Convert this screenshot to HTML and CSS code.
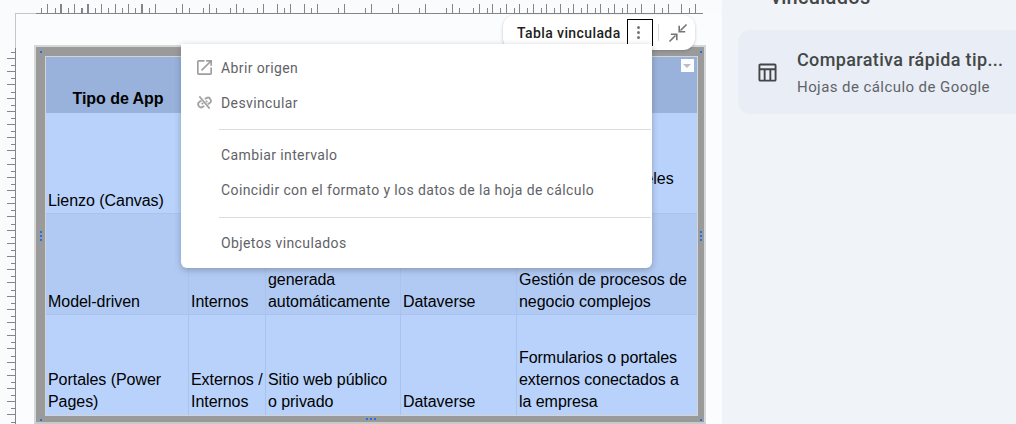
FILE: index.html
```html
<!DOCTYPE html>
<html lang="es">
<head>
<meta charset="utf-8">
<title>Tabla vinculada</title>
<link rel="stylesheet" href="styles.css">
</head>
<body>
<div class="app">
  <main class="canvas">
    <div class="hruler-row"><div class="hruler"></div></div>
    <div class="canvas-body">
      <div class="vruler"></div>
      <div class="page">
        <div class="frame">
          <span class="handle h-tl"></span>
          <span class="handle h-tr"></span>
          <span class="handle h-ml"></span>
          <span class="handle h-mr"></span>
          <span class="handle h-bl"></span>
          <span class="handle h-bc"></span>
          <span class="handle h-br"></span>
          <div class="sheet">
            <div class="cell head">Tipo de App</div>
            <div class="cell head"></div>
            <div class="cell head"></div>
            <div class="cell head"></div>
            <div class="cell head last"><span class="filter"></span></div>
            <div class="cell">Lienzo (Canvas)</div>
            <div class="cell"></div>
            <div class="cell"></div>
            <div class="cell"></div>
            <div class="cell last">Apps ágiles y paneles<br>ligeros</div>
            <div class="cell alt">Model-driven</div>
            <div class="cell alt">Internos</div>
            <div class="cell alt">generada automáticamente</div>
            <div class="cell alt">Dataverse</div>
            <div class="cell alt last">Gestión de procesos de negocio complejos</div>
            <div class="cell">Portales (Power Pages)</div>
            <div class="cell">Externos / Internos</div>
            <div class="cell">Sitio web público o privado</div>
            <div class="cell">Dataverse</div>
            <div class="cell last">Formularios o portales externos conectados a la empresa</div>
          </div>
        </div>
      </div>
    </div>

    <div class="chip">
      <span class="chip-label">Tabla vinculada</span>
      <span class="kebab"><i></i><i></i><i></i></span>
      <span class="chip-sep"></span>
      <svg class="collapse" viewBox="0 0 20 20" width="20" height="20"><path d="M18.5 1.5 12.5 7.5M11.2 2.8v6h6M1.5 18.5 7.5 12.5M2.8 11.2h6v6" fill="none" stroke="#757575" stroke-width="1.6"/></svg>
    </div>

    <div class="menu">
      <div class="item">
        <svg class="ico" viewBox="3 3 18 18" width="15" height="15"><path fill="#9e9e9e" d="M19 19H5V5h7V3H5a2 2 0 0 0-2 2v14a2 2 0 0 0 2 2h14c1.1 0 2-.9 2-2v-7h-2v7zM14 3v2h3.59l-9.83 9.83 1.41 1.41L19 6.41V10h2V3h-7z"/></svg>
        <span>Abrir origen</span>
      </div>
      <div class="item">
        <svg class="ico" viewBox="0 0 16 16" width="15" height="15"><g transform="rotate(-28 8 8)"><path d="M6 4.8H4a3.2 3.2 0 0 0 0 6.4h2M10 4.8h2a3.2 3.2 0 0 1 0 6.4h-2M4.5 8H6.5M9.5 8h2" fill="none" stroke="#a3a3a3" stroke-width="2"/></g><path d="M2.5 1.5 13.5 14.5" fill="none" stroke="#a3a3a3" stroke-width="1.8"/></svg>
        <span>Desvincular</span>
      </div>
      <div class="rule"></div>
      <div class="item plain">Cambiar intervalo</div>
      <div class="item plain">Coincidir con el formato y los datos de la hoja de cálculo</div>
      <div class="rule rule-low"></div>
      <div class="item plain">Objetos vinculados</div>
    </div>
  </main>

  <aside class="side">
    <h2 class="side-title">vinculados</h2>
    <div class="card">
      <svg class="table-ico" viewBox="0 0 20 20" width="19" height="19"><path d="M2.5 1.5h15a1 1 0 0 1 1 1v15a1 1 0 0 1-1 1h-15a1 1 0 0 1-1-1v-15a1 1 0 0 1 1-1ZM1.5 6.5h17M7 6.5v12M13 6.5v12" fill="none" stroke="#444746" stroke-width="2"/></svg>
      <div class="card-text">
        <div class="card-title">Comparativa rápida tip...</div>
        <div class="card-sub">Hojas de cálculo de Google</div>
      </div>
    </div>
  </aside>
</div>
</body>
</html>
```
FILE: styles.css
```css
* { box-sizing: border-box; }
html, body { margin: 0; padding: 0; height: 424px; overflow: hidden; }
body { font-family: "Liberation Sans", Arial, sans-serif; color: #000; background: #f9fbfd; }
.app { display: flex; width: 1016px; height: 424px; overflow: hidden; }

.canvas { position: relative; width: 722px; flex: none; background: #f9fbfd; overflow: hidden; }
.hruler-row {
  height: 14px;
  padding-left: 36px;
  background: linear-gradient(#c4c7c5, #c4c7c5) 15px 13px / 21px 1px no-repeat;
}
.hruler {
  height: 14px;
  width: 667px;
  border-bottom: 1px solid #80868b;
  background:
    repeating-linear-gradient(90deg, transparent 0 11px, #80868b 11px 12px, transparent 12px 13.5px) 0 100% / 100% 9px no-repeat,
    repeating-linear-gradient(90deg, transparent 0 5px, #80868b 5px 6px, transparent 6px 13.5px) 0 100% / 100% 5px no-repeat;
}
.canvas-body {
  display: flex;
  height: 410px;
  background: linear-gradient(#c4c7c5, #c4c7c5) 15px 0 / 1px 100% no-repeat;
}
.vruler {
  width: 16px;
  flex: none;
  margin-top: 34px;
  border-right: 1px solid #80868b;
  background:
    repeating-linear-gradient(180deg, transparent 0 10px, #80868b 10px 11px, transparent 11px 13.2px) 100% 0 / 8px 100% no-repeat,
    repeating-linear-gradient(180deg, transparent 0 4px, #80868b 4px 5px, transparent 5px 13.2px) 100% 0 / 4px 100% no-repeat;
}
.page {
  flex: 1;
  padding: 31px 0 0 18px;
  background: #fbfcfe;
}
.frame {
  position: relative;
  width: 672px;
  height: 379px;
  border: 2px solid #d6d8d6;
  border-bottom-color: #c8cac8;
  background: #9a9a9a;
  padding: 10px 7px 7px 10px;
}

.handle { position: absolute; background: #1a73e8; width: 2px; height: 2px; }
.h-tl { left: 4px; top: 4px; }
.h-tr { right: 2px; top: 4px; }
.h-bl { left: 4px; bottom: 1px; }
.h-br { right: 2px; bottom: 1px; }
.h-ml { left: 4px; top: 184px; height: 10px; background: repeating-linear-gradient(180deg, #1a73e8 0 2px, transparent 2px 4px); }
.h-mr { right: 2px; top: 184px; height: 10px; background: repeating-linear-gradient(180deg, #1a73e8 0 2px, transparent 2px 4px); }
.h-bc { left: 330px; bottom: 2px; width: 10px; background: repeating-linear-gradient(90deg, #1a73e8 0 2px, transparent 2px 4px); }

.sheet {
  display: grid;
  grid-template-columns: 143px 77px 135px 116px 180px;
  grid-template-rows: 56px 101px 101px 100px;
  width: 651px;
  height: 358px;
  outline: 1px solid #d3d5d5;
  background: #b8d2fb;
}
.cell {
  display: flex;
  align-items: flex-end;
  font-size: 16px;
  line-height: 22px;
  letter-spacing: -.05px;
  padding: 0 1px 1px 2px;
  background: #b8d2fb;
  color: #000;
  border-right: 1px solid #a9c3ee;
  border-bottom: 1px solid #a9c3ee;
}
.cell:nth-last-child(-n+5) { border-bottom: 0; padding-bottom: 2px; }
.cell.alt { background: #b1caf4; }
.cell.last { border-right: 0; padding-right: 8px; }
.head {
  background: #98b2dc;
  font-weight: 700;
  justify-content: center;
  border: 0;
  padding-bottom: 3px;
}
.head.last { position: relative; }
.filter {
  position: absolute;
  top: 2px;
  right: 3px;
  width: 13px;
  height: 13px;
  background: #fafcfe;
}
.filter::after {
  content: "";
  position: absolute;
  left: 2px;
  top: 5px;
  border-left: 4.5px solid transparent;
  border-right: 4.5px solid transparent;
  border-top: 4px solid #bdbdbd;
}

.chip {
  position: absolute;
  left: 503px;
  top: 15px;
  width: 192px;
  height: 35px;
  display: flex;
  align-items: center;
  background: #fff;
  border-radius: 12px;
  padding-left: 14px;
  box-shadow: 0 1px 3px rgba(60, 64, 67, .3);
}
.chip-label { font-family: Roboto, sans-serif; font-size: 14px; font-weight: 500; letter-spacing: .4px; color: #1f1f1f; white-space: nowrap; }
.kebab {
  width: 26px;
  height: 27px;
  margin-left: 6px;
  padding-right: 2px;
  border: 1px solid #000;
  flex: none;
  display: flex;
  flex-direction: column;
  align-items: center;
  justify-content: center;
  gap: 2px;
}
.kebab i { width: 3px; height: 3px; border-radius: 50%; background: #757575; }
.chip-sep { width: 1px; height: 17px; background: #dadce0; margin: 0 9px 0 5px; flex: none; }
.collapse { flex: none; }

.menu {
  position: absolute;
  left: 181px;
  top: 44px;
  width: 471px;
  height: 224px;
  background: #fff;
  border-radius: 0 0 6px 6px;
  padding-top: 6px;
  box-shadow: 0 2px 6px rgba(60, 64, 67, .35);
  font-family: Roboto, sans-serif;
  font-size: 14px;
  letter-spacing: .39px;
  color: #5f6368;
}
.item { display: flex; align-items: center; height: 35px; padding-left: 16px; gap: 9px; white-space: nowrap; }
.item.plain { padding-left: 40px; }
.ico { flex: none; }
.rule { height: 1px; background: #dadce0; margin: 9px 1px 7px 38px; }
.rule-low { margin-top: 10px; }

.side { flex: 1; background: #f0f4f9; padding: 0 16px; }
.side-title {
  margin: -14px 0 0 33px;
  font-family: Roboto, sans-serif;
  font-size: 20px;
  line-height: 22px;
  font-weight: 500;
  letter-spacing: .3px;
  color: #444746;
}
.card {
  display: flex;
  align-items: center;
  height: 84px;
  width: 300px;
  margin-top: 22px;
  background: #e9eef6;
  border-radius: 12px;
  padding-left: 20px;
}
.table-ico { flex: none; }
.card-text { margin-left: 20px; }
.card-title { font-family: Roboto, sans-serif; font-size: 18px; line-height: 24px; color: #444746; font-weight: 500; white-space: nowrap; letter-spacing: .37px; }
.card-sub { font-family: Roboto, sans-serif; font-size: 15px; line-height: 20px; margin-top: 5px; color: #5f6368; white-space: nowrap; letter-spacing: .43px; }
```
